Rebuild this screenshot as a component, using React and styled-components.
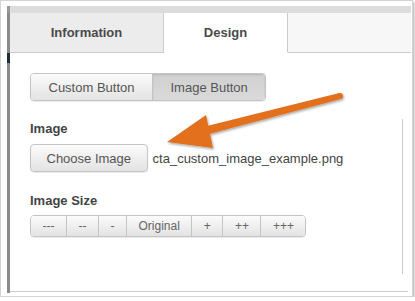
import styled, { createGlobalStyle, css } from "styled-components";

const GlobalStyle = createGlobalStyle`
  body {
    margin: 0;
    background: #ffffff;
    font-family: "Liberation Sans", Arial, sans-serif;
  }
`;

const Frame = styled.div`
  position: relative;
  width: 413px;
  height: 297px;
  box-sizing: border-box;
  border: 1px solid #d4d4d4;
  box-shadow: 1px 2px 3px rgba(0, 0, 0, 0.35);
  padding: 5px 1px 0 6px;
  display: flex;
  align-items: flex-start;
  background: #fff;
`;

const Strip = styled.div`
  width: 3px;
  height: 287px;
  background: linear-gradient(
    to bottom,
    #9a9a9a 0 7px,
    #8a8a8a 7px 47px,
    #1f2c3d 47px 57px,
    #8a8a8a 57px 100%
  );
`;

const Panel = styled.div`
  flex: 1;
  display: flex;
  flex-direction: column;
`;

const TopBar = styled.div`
  height: 7px;
  background: #dcdcdc;
`;

const Tabs = styled.div`
  display: flex;
  height: 40px;
`;

const Tab = styled.div`
  box-sizing: border-box;
  width: ${(p) => p.$width}px;
  display: flex;
  align-items: center;
  justify-content: center;
  font-size: 13px;
  font-weight: 700;
  color: #4a4a4a;
  border-right: 1px solid #cccccc;
  background: ${(p) => (p.$active ? "#ffffff" : "#ececec")};
  border-bottom: 1px solid ${(p) => (p.$active ? "#ffffff" : "#cccccc")};
  padding-bottom: 1px;
`;

const TabFill = styled.div`
  flex: 1;
  background: #f7f7f7;
  border-bottom: 1px solid #cccccc;
`;

const Body = styled.div`
  box-sizing: border-box;
  width: 398px;
  height: 239px;
  padding: 20px 5px 0 20px;
  border-bottom: 1px solid #cccccc;
`;

const Group = styled.div`
  display: inline-flex;
  border: 1px solid #c4c4c4;
  border-radius: 4px;
  overflow: hidden;
  box-shadow: 0 1px 1px rgba(0, 0, 0, 0.08);
`;

const buttonFace = css`
  background: linear-gradient(to bottom, #fbfbfb, #e3e3e3);
  color: #555555;
  font-family: "Liberation Sans", Arial, sans-serif;
`;

const Segment = styled.div`
  ${buttonFace}
  height: ${(p) => (p.$small ? 20 : 26)}px;
  display: flex;
  align-items: center;
  padding: 0 ${(p) => (p.$small ? 11.5 : 17.5)}px;
  font-size: ${(p) => (p.$small ? 12 : 13)}px;
  color: ${(p) => (p.$small ? "#666666" : "#555555")};
  & + & {
    border-left: 1px solid #c4c4c4;
  }
  ${(p) =>
    p.$active &&
    css`
      background: linear-gradient(to bottom, #d0d0d0, #dadada);
      box-shadow: inset 0 1px 2px rgba(0, 0, 0, 0.12);
    `}
`;

const Section = styled.div`
  margin-top: 18px;
  padding: 2px 0 37px;
  border-right: 1px solid #cccccc;
`;

const Label = styled.div`
  font-size: 13px;
  line-height: 15px;
  font-weight: 700;
  color: #444444;
  margin-top: ${(p) => p.$gap || 0}px;
`;

const FileRow = styled.div`
  display: flex;
  align-items: center;
  margin-top: 8px;
`;

const Button = styled.div`
  ${buttonFace}
  box-sizing: border-box;
  height: 28px;
  display: flex;
  align-items: center;
  padding: 0 15.5px;
  font-size: 13px;
  border: 1px solid #c4c4c4;
  border-radius: 4px;
  box-shadow: 0 1px 1px rgba(0, 0, 0, 0.08);
`;

const FileName = styled.span`
  margin-left: 5px;
  font-size: 13px;
  color: #444444;
`;

const SizeGroup = styled(Group)`
  margin-top: 7px;
`;

const Overlay = styled.svg`
  position: absolute;
  left: -1px;
  top: -1px;
  pointer-events: none;
`;

const Arrow = () => (
  <Overlay width="415" height="301" viewBox="0 0 415 301">
    <defs>
      <filter id="sh" x="-10%" y="-20%" width="130%" height="160%">
        <feDropShadow dx="1" dy="1.5" stdDeviation="1" floodColor="#000" floodOpacity="0.35" />
      </filter>
    </defs>
    <g fill="#e2701f" filter="url(#sh)">
      <polygon points="209,134 207,126 339.3,93.1 340.8,98.9" />
      <circle cx="340" cy="96" r="3" />
      <polygon points="167,142 206,115 213,148" />
    </g>
  </Overlay>
);

const sizes = ["---", "--", "-", "Original", "+", "++", "+++"];

export default function App() {
  return (
    <>
      <GlobalStyle />
      <Frame>
        <Strip />
        <Panel>
          <TopBar />
          <Tabs>
            <Tab $width={154}>Information</Tab>
            <Tab $width={124} $active>
              Design
            </Tab>
            <TabFill />
          </Tabs>
          <Body>
            <Group>
              <Segment>Custom Button</Segment>
              <Segment $active>Image Button</Segment>
            </Group>
            <Section>
              <Label>Image</Label>
              <FileRow>
                <Button>Choose Image</Button>
                <FileName>cta_custom_image_example.png</FileName>
              </FileRow>
              <Label $gap={21}>Image Size</Label>
              <SizeGroup>
                {sizes.map((s) => (
                  <Segment key={s} $small>
                    {s}
                  </Segment>
                ))}
              </SizeGroup>
            </Section>
          </Body>
        </Panel>
        <Arrow />
      </Frame>
    </>
  );
}
